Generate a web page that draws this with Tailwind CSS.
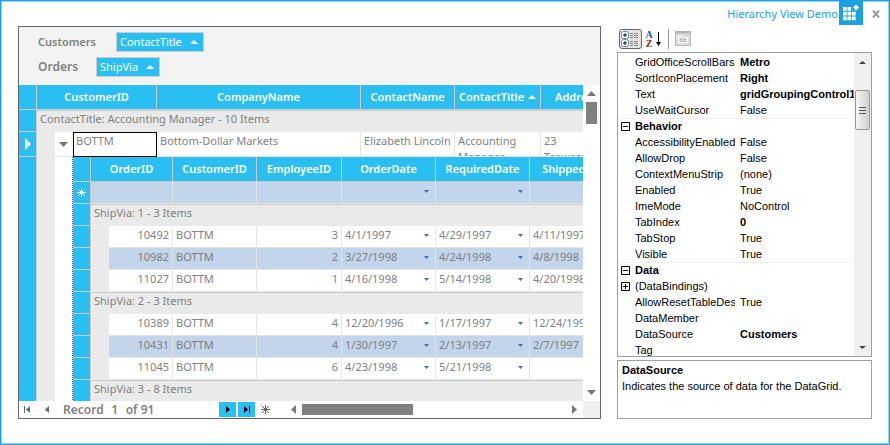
<!DOCTYPE html>
<html lang="en">
<head>
<meta charset="utf-8">
<title>Hierarchy View Demo</title>
<script src="https://cdn.jsdelivr.net/npm/@tailwindcss/browser@4"></script>
</head>
<body class="bg-white">
<div class="flex h-screen flex-col border border-[#1ba1e2] font-['Noto_Sans','Open_Sans',sans-serif] text-[11px] leading-4 text-[#808080]">
<div class="flex min-h-0 flex-1 flex-col border border-[#8fd3f2]">

  <header class="-mt-0.5 flex h-[26px] shrink-0 items-start justify-end">
    <h1 class="pt-1.5 pr-px text-[11px] leading-4 whitespace-nowrap text-[#1ba1e2]">Hierarchy View Demo</h1>
    <svg class="h-[25px] w-6" viewBox="0 0 24 25" aria-hidden="true">
      <rect width="24" height="25" fill="#1ba1e2"/>
      <path fill="#fff" d="M4 7h3.700v3.700H4zM8.500 7h3.700v3.700H8.500zM4 11.800h3.700v3.700H4zM8.500 11.800h3.700v3.700H8.500zM13 11.800h3.700v3.700H13zM4 16.600h3.700v3.700H4zM8.500 16.600h3.700v3.700H8.500zM13 16.600h3.700v3.700H13zM17 4.500l3 3-3 3-3-3z"/>
    </svg>
    <button aria-label="Close" class="mt-2.5 mr-2 ml-[9px] h-2 w-2">
      <svg class="h-2 w-2" viewBox="0 0 8 8" stroke="#999" stroke-width="2"><path d="M1 0.500 7 7.500M7 0.500 1 7.500"/></svg>
    </button>
  </header>

  <main class="flex min-h-0 flex-1 gap-4 pr-4 pb-6 pl-4">

    <section aria-label="Grouping grid" class="flex min-w-0 flex-1 flex-col border border-[#666]">
      <div class="flex h-[58px] shrink-0 flex-col items-start gap-[5px] bg-[#f3f3f3] pt-[5px] pl-[19px]">
        <div class="flex h-5 items-center font-semibold"><span class="w-[78px]">Customers</span>
          <button class="flex h-5 items-center gap-2 border border-[#ccc] bg-[#2abff2] pr-[5px] pl-[3px] font-normal text-white">ContactTitle
            <svg class="h-1 w-2" viewBox="0 0 8 4" fill="#fff"><path d="M4 0 8 4H0z"/></svg></button>
        </div>
        <div class="flex h-5 items-center font-semibold"><span class="w-[58px] text-[12px]">Orders</span>
          <button class="flex h-5 items-center gap-2 border border-[#ccc] bg-[#2abff2] pr-[5px] pl-[3px] font-normal text-white">ShipVia
            <svg class="h-1 w-2" viewBox="0 0 8 4" fill="#fff"><path d="M4 0 8 4H0z"/></svg></button>
        </div>
      </div>

      <div class="flex min-h-0 flex-1">
        <div class="min-w-0 flex-1 overflow-hidden">
          <table class="w-[594px] table-fixed border-separate border-spacing-0">
            <colgroup><col class="w-[18px]"><col class="w-[18px]"><col class="w-[18px]"><col class="w-[84px]"><col class="w-[204px]"><col class="w-[94px]"><col class="w-[86px]"><col class="w-[72px]"></colgroup>
            <thead>
              <tr class="h-[25px] text-white [&>th]:border-r [&>th]:border-b [&>th]:border-[#ccc] [&>th]:bg-[#2abff2] [&>th]:font-semibold">
                <th></th><th colspan="3">CustomerID</th><th>CompanyName</th><th>ContactName</th>
                <th><span class="flex items-center justify-center gap-1">ContactTitle <svg class="h-1 w-2" viewBox="0 0 8 4" fill="#fff"><path d="M4 0 8 4H0z"/></svg></span></th>
                <th>Address</th>
              </tr>
            </thead>
            <tbody>
              <tr class="h-[22px]">
                <td class="border-r border-b border-[#ccc] bg-[#2abff2]"></td>
                <td colspan="7" class="border-t border-[#ccc] bg-[#eaeaea] pl-[3px] align-top">ContactTitle: Accounting Manager - 10 Items</td>
              </tr>
              <tr class="h-[25px]">
                <td class="border-r border-b border-[#ccc] bg-[#2abff2]"><svg class="ml-1.5 h-3 w-1.5" viewBox="0 0 6 12" fill="#fff"><path d="M0 0 6 6 0 12z"/></svg></td>
                <td class="bg-[#eaeaea]"></td>
                <td class="border-b border-[#e4e4e4]"><button aria-label="Collapse orders" class="ml-1 flex"><svg class="h-[5px] w-[9px]" viewBox="0 0 9 5" fill="#777"><path d="M0 0h9L4.500 5z"/></svg></button></td>
                <td class="border border-black pl-0.5 align-top">BOTTM</td>
                <td class="border-r border-b border-[#e4e4e4] pt-px pl-[3px] align-top">Bottom-Dollar Markets</td>
                <td class="border-r border-b border-[#e4e4e4] pt-px pl-[3px] align-top whitespace-nowrap">Elizabeth Lincoln</td>
                <td class="border-r border-b border-[#e4e4e4] pt-px pl-[3px] align-top"><div class="h-[23px] overflow-hidden">Accounting Manager</div></td>
                <td class="border-b border-[#e4e4e4] pt-px pl-[3px] align-top"><div class="h-[23px] overflow-hidden">23<br>Tsawassen</div></td>
              </tr>
              <tr>
                <td class="border-r border-[#ccc] bg-[#2abff2]"></td>
                <td class="bg-[#eaeaea]"></td>
                <td class="border-r border-dotted border-[#555]"></td>
                <td colspan="5" class="align-top">
                  <table class="w-[551px] table-fixed border-separate border-spacing-0">
                    <colgroup><col class="w-[18px]"><col class="w-[18px]"><col class="w-[64px]"><col class="w-[84px]"><col class="w-[85px]"><col class="w-[94px]"><col class="w-[94px]"><col class="w-[94px]"></colgroup>
                    <thead>
                      <tr class="h-[25px] text-white [&>th]:border-r [&>th]:border-b [&>th]:border-[#ccc] [&>th]:bg-[#2abff2] [&>th]:font-semibold">
                        <th></th><th colspan="2">OrderID</th><th>CustomerID</th><th>EmployeeID</th><th>OrderDate</th><th>RequiredDate</th><th>ShippedDate</th>
                      </tr>
                    </thead>
                    <tbody id="orders"></tbody>
                  </table>
                </td>
              </tr>
            </tbody>
          </table>
        </div>
        <div class="flex w-[17px] shrink-0 flex-col items-center pt-1.5 pb-1.5">
          <button aria-label="Scroll up" class="flex"><svg class="h-[5px] w-[9px]" viewBox="0 0 9 5" fill="#777"><path d="M0 5h9L4.500 0z"/></svg></button>
          <div class="mt-1.5 h-[22px] w-[11px] bg-[#808080]"></div>
          <button aria-label="Scroll down" class="mt-auto flex"><svg class="h-[5px] w-[9px]" viewBox="0 0 9 5" fill="#777"><path d="M0 0h9L4.500 5z"/></svg></button>
        </div>
      </div>

      <div class="flex h-[17px] shrink-0 items-center">
        <div class="flex w-[264px] shrink-0 items-center pl-[5px]">
          <button aria-label="First record"><svg class="h-[7px] w-[7px]" viewBox="0 0 7 7" fill="#666"><path d="M0 0h1v7H0zM6 0v7L2 3.500z"/></svg></button>
          <button aria-label="Previous record" class="ml-3.5"><svg class="h-[7px] w-1" viewBox="0 0 4 7" fill="#666"><path d="M4 0v7L0 3.500z"/></svg></button>
          <label class="ml-3.5 text-[12px] font-semibold" for="rec">Record</label>
          <input id="rec" value="1" class="w-[22px] text-center text-[12px] font-semibold">
          <span class="text-[12px] font-semibold">of 91</span>
          <button aria-label="Next record" class="mr-0.5 ml-auto flex h-[15px] w-[17px] items-center justify-center bg-[#2abff2]"><svg class="h-[7px] w-1" viewBox="0 0 4 7"><path d="M0 0v7L4 3.500z"/></svg></button>
          <button aria-label="Last record" class="mr-1.5 flex h-[15px] w-[17px] items-center justify-center bg-[#2abff2]"><svg class="h-[7px] w-1.5" viewBox="0 0 6 7"><path d="M0 0v7L4 3.500zM5 0h1v7H5z"/></svg></button>
          <button aria-label="Add record" class="mr-[13px]"><svg class="h-[9px] w-[9px]" viewBox="0 0 9 9" stroke="#666"><path d="M4.500 0v9M0 4.500h9M1 1l7 7M8 1 1 8"/></svg></button>
        </div>
        <div class="flex min-w-0 flex-1 items-center pr-1.5 pl-2">
          <button aria-label="Scroll left"><svg class="h-[9px] w-[5px]" viewBox="0 0 5 9" fill="#777"><path d="M5 0v9L0 4.500z"/></svg></button>
          <div class="ml-1.5 h-[11px] w-[111px] bg-[#808080]"></div>
          <button aria-label="Scroll right" class="ml-auto"><svg class="h-[9px] w-[5px]" viewBox="0 0 5 9" fill="#777"><path d="M0 0v9l5-4.500z"/></svg></button>
        </div>
        <div class="h-full w-[17px] shrink-0 bg-[#f0f0f0]"></div>
      </div>
    </section>

    <aside aria-label="Properties" class="flex w-[255px] shrink-0 flex-col font-['Liberation_Sans',Arial,sans-serif] text-black">
      <div class="flex h-[26px] shrink-0 items-start pt-[3px] pl-0.5">
        <button aria-label="Categorized" class="flex h-5 w-[23px] items-center justify-center rounded-[3px] border border-[#666] bg-[#e4e4e4]">
          <svg class="h-4 w-[19px]" viewBox="0 0 19 16" fill="none" stroke="#5b8dc4"><rect x=".5" y=".5" width="7" height="7" rx="2" fill="#fff"/><rect x=".5" y="8.500" width="7" height="7" rx="2" fill="#fff"/><path stroke="#111" d="M2 4h4M4 2v4M2 12h4M4 10v4"/><path stroke="#888" d="M9 2.500h3M13 2.500h4M9 4.500h3M13 4.500h4M9 6.500h3M13 6.500h4M9 10.500h3M13 10.500h4M9 12.500h3M13 12.500h4M9 14.500h3M13 14.500h4"/></svg>
        </button>
        <button aria-label="Alphabetical" class="ml-[3px] flex h-5 items-center gap-[3px]">
          <span class="flex w-2 flex-col font-['Liberation_Serif',serif] text-[10px] leading-[9px] font-bold"><span class="text-[#2d4f9e]">A</span><span class="text-[#a02020]">Z</span></span>
          <svg class="h-3.5 w-[5px]" viewBox="0 0 5 14"><path d="M2 0h1v10h2L2.500 14 0 10h2z"/></svg>
        </button>
        <div class="ml-[7px] h-5 w-px bg-[#999]"></div>
        <button aria-label="Property pages" disabled class="mt-0.5 ml-1.5 flex">
          <svg class="h-[15px] w-4" viewBox="0 0 16 15" fill="none" stroke="#b5b5b5"><rect x=".5" y=".5" width="15" height="14" fill="#ddd"/><path d="M1 1.500h14" stroke-width="2"/><path stroke="#fff" d="M3.500 5.500h4l1 1h4v5h-9z"/><path d="M5 8.500h2M8 8.500h3M5 10.500h6"/></svg>
        </button>
      </div>
      <div class="flex min-h-0 flex-1 border border-[#a0a0a0]">
        <div class="min-w-0 flex-1 overflow-hidden pt-px">
          <table class="w-full table-fixed border-separate border-spacing-0 [&_th]:font-normal [&_th]:text-left [&_tr]:h-4 [&_th]:overflow-hidden [&_th]:whitespace-nowrap [&_td]:overflow-hidden [&_td]:whitespace-nowrap [&_td]:leading-4">
            <colgroup><col class="w-[17px]"><col class="w-[100px]"><col class="w-[5px]"><col></colgroup>
            <tbody id="props"></tbody>
          </table>
        </div>
        <div class="flex w-[17px] shrink-0 flex-col items-center bg-[#f0f0f0] pt-2 pb-[7px]">
          <button aria-label="Scroll up" class="flex"><svg class="h-[3px] w-[7px]" viewBox="0 0 7 3" fill="#444"><path d="M0 3h7L3.500 0z"/></svg></button>
          <div class="mt-[26px] flex h-10 w-[15px] flex-col items-center justify-center gap-0.5 rounded-xs border border-[#999] bg-linear-to-r from-[#f5f5f5] to-[#d0d0d0]"><i class="h-px w-[7px] bg-[#555]"></i><i class="h-px w-[7px] bg-[#555]"></i><i class="h-px w-[7px] bg-[#555]"></i></div>
          <button aria-label="Scroll down" class="mt-auto flex"><svg class="h-[3px] w-[7px]" viewBox="0 0 7 3" fill="#444"><path d="M0 0h7L3.500 3z"/></svg></button>
        </div>
      </div>
      <div class="mt-[3px] h-[59px] shrink-0 border border-[#a0a0a0] px-1 pt-px">
        <h2 class="font-bold">DataSource</h2>
        <p>Indicates the source of data for the DataGrid.</p>
      </div>
    </aside>
  </main>
</div>
</div>

<script>
const arrow = '<button aria-label="Pick date" class="flex"><svg class="h-[3px] w-[5px]" viewBox="0 0 5 3" fill="#3f6fae"><path d="M0 0h5L2.500 3z"/></svg></button>';
const indicator = '<td class="border-r border-b border-[#ccc] bg-[#2abff2]"></td>';
const group = t => `<tr class="h-[22px]">${indicator}<td colspan="7" class="border-t border-[#ccc] bg-[#eaeaea] pl-[3px] align-top">${t}</td></tr>`;
const cell = 'border-r border-b border-[#e4e4e4] px-[3px] pt-px align-top';
const date = v => `<td class="${cell}"><div class="flex h-4 items-center justify-between pr-[3px]">${v}${arrow}</div></td>`;
const order = ([id, emp, od, rd, sd], i) => `<tr class="h-[22px] ${i === 1 ? 'bg-[#c3d5ea]' : 'bg-white'}">${indicator}<td class="bg-[#eaeaea]"></td><td class="${cell} text-right">${id}</td><td class="${cell}">BOTTM</td><td class="${cell} text-right">${emp}</td>${date(od)}${date(rd)}<td class="${cell}">${sd}</td></tr>`;
const addRow = `<tr class="h-[22px] bg-[#c3d5ea]"><td class="border-r border-b border-[#ccc] bg-[#2abff2]"><svg class="mx-auto h-[9px] w-[9px]" viewBox="0 0 9 9" stroke="#fff"><path d="M4.500 0v9M0 4.500h9M1 1l7 7M8 1 1 8"/></svg></td><td colspan="2" class="${cell}"></td><td class="${cell}"></td><td class="${cell}"></td>${date('<span></span>')}${date('<span></span>')}<td class="${cell}"></td></tr>`;
document.getElementById('orders').innerHTML = addRow
  + group('ShipVia: 1 - 3 Items')
  + [['10492', 3, '4/1/1997', '4/29/1997', '4/11/1997'], ['10982', 2, '3/27/1998', '4/24/1998', '4/8/1998'], ['11027', 1, '4/16/1998', '5/14/1998', '4/20/1998']].map(order).join('')
  + group('ShipVia: 2 - 3 Items')
  + [['10389', 4, '12/20/1996', '1/17/1997', '12/24/1996'], ['10431', 4, '1/30/1997', '2/13/1997', '2/7/1997'], ['11045', 6, '4/23/1998', '5/21/1998', '']].map(order).join('')
  + group('ShipVia: 3 - 8 Items');

const box = open => `<button aria-label="${open ? 'Collapse' : 'Expand'}" class="ml-[3px] flex"><svg class="h-[9px] w-[9px]" viewBox="0 0 9 9" fill="none" stroke="#000"><path d="${open ? 'M.5.5h8v8h-8zM2 4.500h5' : 'M.5.5h8v8h-8zM2 4.500h5M4.500 2v5'}"/></svg></button>`;
const prop = (n, v, bold, icon) => `<tr><td>${icon || ''}</td><th scope="row">${n}</th><td></td><td class="${bold ? 'font-bold' : ''}">${v}</td></tr>`;
const category = n => `<tr><td class="border-t border-[#f0f0f0]">${box(true)}</td><td colspan="3" class="border-t border-[#f0f0f0] font-bold"><div class="h-[15px] leading-[15px]">${n}</div></td></tr>`;
document.getElementById('props').innerHTML =
  prop('GridOfficeScrollBars', 'Metro', 1) + prop('SortIconPlacement', 'Right', 1) + prop('Text', 'gridGroupingControl1', 1) + prop('UseWaitCursor', 'False')
  + category('Behavior')
  + prop('AccessibilityEnabled', 'False') + prop('AllowDrop', 'False') + prop('ContextMenuStrip', '(none)') + prop('Enabled', 'True') + prop('ImeMode', 'NoControl') + prop('TabIndex', '0', 1) + prop('TabStop', 'True') + prop('Visible', 'True')
  + category('Data')
  + prop('(DataBindings)', '', 0, box(false)) + prop('AllowResetTableDesigner', 'True') + prop('DataMember', '') + prop('DataSource', 'Customers', 1) + prop('Tag', '');
</script>
</body>
</html>
